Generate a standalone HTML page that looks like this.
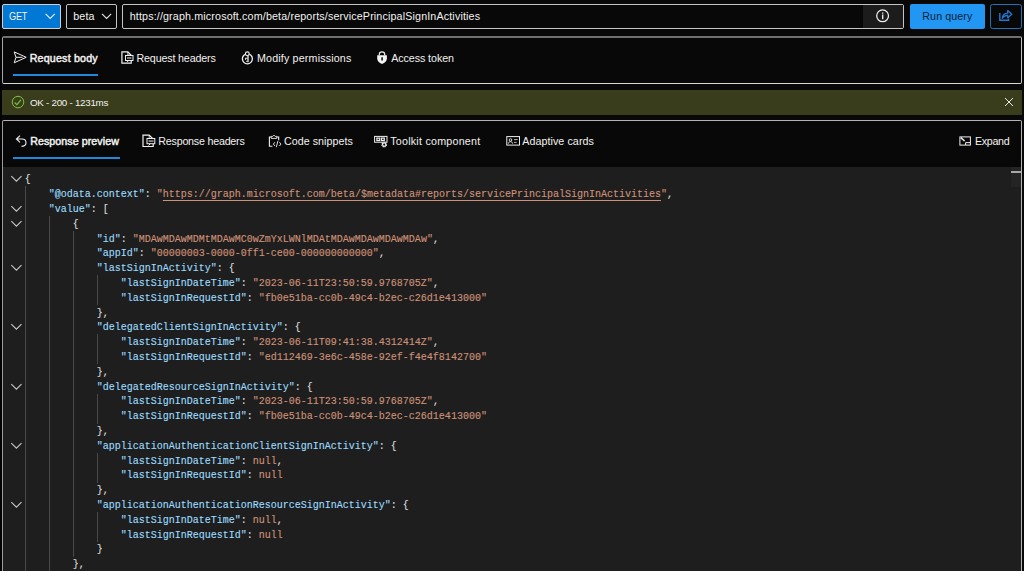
<!DOCTYPE html>
<html lang="en">
<head>
<meta charset="utf-8">
<title>Graph Explorer</title>
<style>
html,body{margin:0;padding:0;}
body{width:1024px;height:571px;overflow:hidden;background:#080808;position:relative;font-family:"Liberation Sans",sans-serif;font-size:10.7px;color:#f3f2f1;}
.abs{position:absolute;box-sizing:border-box;}
.t{position:absolute;white-space:nowrap;line-height:14px;font-size:10.7px;}
.b{-webkit-text-stroke:0.45px #f3f2f1;}
#get{left:2px;top:4px;width:59px;height:25px;background:#0078d4;border:1px solid #cfcfcf;border-radius:2px;}
#beta{left:66px;top:4px;width:51px;height:25px;background:#080808;border:1px solid #c4c4c4;border-radius:2px;}
#url{left:122px;top:4px;width:782px;height:25px;background:#080808;border:1px solid #c4c4c4;border-radius:2px;}
#info{left:863px;top:5px;width:40px;height:23px;background:#1c1c1c;}
#run{left:909.5px;top:4px;width:75.5px;height:25px;background:#2196f3;border-radius:2px;}
#share{left:990px;top:4px;width:32px;height:25px;background:#080808;border:1px solid #2372b8;border-radius:2.5px;}
#req{left:2px;top:36px;width:1020px;height:48px;background:#080808;border:1px solid #c4c4c4;border-top:2px solid #707070;border-left-color:#a4a4a4;border-bottom-color:#d8d8d8;border-radius:2px;}
#status{left:2px;top:89.5px;width:1020px;height:25px;background:#393d1b;}
#resp{left:2px;top:120px;width:1020px;height:460px;background:#080808;border:1px solid #b4b4b4;border-left-color:#9c9c9c;border-radius:2px;}
#code{left:3px;top:167px;width:1018px;height:404px;background:#1e1e1e;}
.ul{position:absolute;height:2px;background:#2188dc;}
.ln{-webkit-text-stroke:0.12px currentColor;position:absolute;white-space:pre;font-family:"Liberation Mono",monospace;font-size:10px;line-height:14.8px;height:14.8px;}
.k{color:#9cdcfe}.s{color:#ce9178}.p{color:#dcdcdc}.u{color:#ce9178;text-decoration:underline;text-underline-offset:3.2px;text-decoration-thickness:1px;}
.guide{position:absolute;width:1px;height:15.4px;background:#484848;}
#ov{position:absolute;left:0;top:0;width:1024px;height:571px;pointer-events:none;}
#ov *{fill:none;stroke:#f0f0f0;stroke-width:1;}
</style>
</head>
<body>
<div class="abs" style="left:0;top:0;width:1.5px;height:571px;background:#030303;"></div>
<div id="get" class="abs"></div>
<div class="t" id="t_get" style="left:9.5px;top:9.3px;transform:scaleX(.86);transform-origin:0 50%;letter-spacing:-0.295px;left:9.30px;">GET</div>
<div id="beta" class="abs"></div>
<div class="t" id="t_beta" style="left:73.5px;top:9.3px;letter-spacing:0.129px;left:73.30px;">beta</div>
<div id="url" class="abs"></div>
<div id="info" class="abs"></div>
<div class="t" id="t_url" style="left:130px;top:9.3px;letter-spacing:0.155px;left:129.70px;">https://graph.microsoft.com/beta/reports/servicePrincipalSignInActivities</div>
<div id="run" class="abs"></div>
<div class="t" id="t_run" style="left:922px;top:9.3px;color:#0c2236;letter-spacing:0.086px;left:922.30px;">Run query</div>
<div id="share" class="abs"></div>

<div id="req" class="abs"></div>
<div class="t b" id="t_reqbody" style="left:29.5px;top:51.3px;letter-spacing:0.186px;left:29.70px;">Request body</div>
<div class="ul" style="left:13.2px;top:73.8px;width:84.9px;"></div>
<div class="t" id="t_reqhead" style="left:136px;top:51.3px;letter-spacing:-0.150px;left:136.50px;">Request headers</div>
<div class="t" id="t_modperm" style="left:257px;top:51.3px;letter-spacing:0.167px;left:257.00px;">Modify permissions</div>
<div class="t" id="t_token" style="left:391px;top:51.3px;letter-spacing:-0.069px;left:391.20px;">Access token</div>

<div id="status" class="abs"></div>
<div class="t" id="t_status" style="left:30px;top:95.7px;font-size:9.8px;letter-spacing:-0.274px;left:30.00px;">OK - 200 - 1231ms</div>

<div id="resp" class="abs"></div>
<div id="code" class="abs"></div>
<div class="t b" id="t_resprev" style="left:30px;top:134px;letter-spacing:0.052px;left:30.20px;">Response preview</div>
<div class="ul" style="left:13.2px;top:156.8px;width:106.9px;"></div>
<div class="t" id="t_reshead" style="left:158px;top:134px;letter-spacing:-0.215px;left:158.30px;">Response headers</div>
<div class="t" id="t_snip" style="left:284px;top:134px;letter-spacing:0.056px;left:283.90px;">Code snippets</div>
<div class="t" id="t_toolkit" style="left:390px;top:134px;letter-spacing:0.241px;left:390.20px;">Toolkit component</div>
<div class="t" id="t_adapt" style="left:522px;top:134px;letter-spacing:0.077px;left:522.20px;">Adaptive cards</div>
<div class="t" id="t_expand" style="left:974px;top:134px;letter-spacing:-0.330px;left:975.00px;">Expand</div>

<div class="ln" style="top:173.40px;left:24.80px"><span class="p">{</span></div>
<svg style="position:absolute;left:11px;top:176.40px;overflow:visible" width="11" height="6" viewBox="0 0 11 6"><path d="M0.3 0.2 L5.4 5.2 L10.5 0.2" fill="none" stroke="#c8c8c8" stroke-width="1.1"/></svg>
<div class="ln" style="top:188.20px;left:48.80px"><span class="k">&quot;@odata.context&quot;</span><span class="p">: </span><span class="s">&quot;</span><span class="u">https://graph.microsoft.com/beta/$metadata#reports/servicePrincipalSignInActivities</span><span class="s">&quot;</span><span class="p">,</span></div>
<div class="guide" style="top:186.30px;left:24.80px"></div>
<div class="ln" style="top:203.00px;left:48.80px"><span class="k">&quot;value&quot;</span><span class="p">: [</span></div>
<svg style="position:absolute;left:11px;top:206.00px;overflow:visible" width="11" height="6" viewBox="0 0 11 6"><path d="M0.3 0.2 L5.4 5.2 L10.5 0.2" fill="none" stroke="#c8c8c8" stroke-width="1.1"/></svg>
<div class="guide" style="top:201.10px;left:24.80px"></div>
<div class="ln" style="top:217.80px;left:72.80px"><span class="p">{</span></div>
<svg style="position:absolute;left:11px;top:220.80px;overflow:visible" width="11" height="6" viewBox="0 0 11 6"><path d="M0.3 0.2 L5.4 5.2 L10.5 0.2" fill="none" stroke="#c8c8c8" stroke-width="1.1"/></svg>
<div class="guide" style="top:215.90px;left:24.80px"></div>
<div class="guide" style="top:215.90px;left:48.80px"></div>
<div class="ln" style="top:232.60px;left:96.80px"><span class="k">&quot;id&quot;</span><span class="p">: </span><span class="s">&quot;MDAwMDAwMDMtMDAwMC0wZmYxLWNlMDAtMDAwMDAwMDAwMDAw&quot;</span><span class="p">,</span></div>
<div class="guide" style="top:230.70px;left:24.80px"></div>
<div class="guide" style="top:230.70px;left:48.80px"></div>
<div class="guide" style="top:230.70px;left:72.80px"></div>
<div class="ln" style="top:247.40px;left:96.80px"><span class="k">&quot;appId&quot;</span><span class="p">: </span><span class="s">&quot;00000003-0000-0ff1-ce00-000000000000&quot;</span><span class="p">,</span></div>
<div class="guide" style="top:245.50px;left:24.80px"></div>
<div class="guide" style="top:245.50px;left:48.80px"></div>
<div class="guide" style="top:245.50px;left:72.80px"></div>
<div class="ln" style="top:262.20px;left:96.80px"><span class="k">&quot;lastSignInActivity&quot;</span><span class="p">: {</span></div>
<svg style="position:absolute;left:11px;top:265.20px;overflow:visible" width="11" height="6" viewBox="0 0 11 6"><path d="M0.3 0.2 L5.4 5.2 L10.5 0.2" fill="none" stroke="#c8c8c8" stroke-width="1.1"/></svg>
<div class="guide" style="top:260.30px;left:24.80px"></div>
<div class="guide" style="top:260.30px;left:48.80px"></div>
<div class="guide" style="top:260.30px;left:72.80px"></div>
<div class="ln" style="top:277.00px;left:120.80px"><span class="k">&quot;lastSignInDateTime&quot;</span><span class="p">: </span><span class="s">&quot;2023-06-11T23:50:59.9768705Z&quot;</span><span class="p">,</span></div>
<div class="guide" style="top:275.10px;left:24.80px"></div>
<div class="guide" style="top:275.10px;left:48.80px"></div>
<div class="guide" style="top:275.10px;left:72.80px"></div>
<div class="guide" style="top:275.10px;left:96.80px"></div>
<div class="ln" style="top:291.80px;left:120.80px"><span class="k">&quot;lastSignInRequestId&quot;</span><span class="p">: </span><span class="s">&quot;fb0e51ba-cc0b-49c4-b2ec-c26d1e413000&quot;</span></div>
<div class="guide" style="top:289.90px;left:24.80px"></div>
<div class="guide" style="top:289.90px;left:48.80px"></div>
<div class="guide" style="top:289.90px;left:72.80px"></div>
<div class="guide" style="top:289.90px;left:96.80px"></div>
<div class="ln" style="top:306.60px;left:96.80px"><span class="p">},</span></div>
<div class="guide" style="top:304.70px;left:24.80px"></div>
<div class="guide" style="top:304.70px;left:48.80px"></div>
<div class="guide" style="top:304.70px;left:72.80px"></div>
<div class="ln" style="top:321.40px;left:96.80px"><span class="k">&quot;delegatedClientSignInActivity&quot;</span><span class="p">: {</span></div>
<svg style="position:absolute;left:11px;top:324.40px;overflow:visible" width="11" height="6" viewBox="0 0 11 6"><path d="M0.3 0.2 L5.4 5.2 L10.5 0.2" fill="none" stroke="#c8c8c8" stroke-width="1.1"/></svg>
<div class="guide" style="top:319.50px;left:24.80px"></div>
<div class="guide" style="top:319.50px;left:48.80px"></div>
<div class="guide" style="top:319.50px;left:72.80px"></div>
<div class="ln" style="top:336.20px;left:120.80px"><span class="k">&quot;lastSignInDateTime&quot;</span><span class="p">: </span><span class="s">&quot;2023-06-11T09:41:38.4312414Z&quot;</span><span class="p">,</span></div>
<div class="guide" style="top:334.30px;left:24.80px"></div>
<div class="guide" style="top:334.30px;left:48.80px"></div>
<div class="guide" style="top:334.30px;left:72.80px"></div>
<div class="guide" style="top:334.30px;left:96.80px"></div>
<div class="ln" style="top:351.00px;left:120.80px"><span class="k">&quot;lastSignInRequestId&quot;</span><span class="p">: </span><span class="s">&quot;ed112469-3e6c-458e-92ef-f4e4f8142700&quot;</span></div>
<div class="guide" style="top:349.10px;left:24.80px"></div>
<div class="guide" style="top:349.10px;left:48.80px"></div>
<div class="guide" style="top:349.10px;left:72.80px"></div>
<div class="guide" style="top:349.10px;left:96.80px"></div>
<div class="ln" style="top:365.80px;left:96.80px"><span class="p">},</span></div>
<div class="guide" style="top:363.90px;left:24.80px"></div>
<div class="guide" style="top:363.90px;left:48.80px"></div>
<div class="guide" style="top:363.90px;left:72.80px"></div>
<div class="ln" style="top:380.60px;left:96.80px"><span class="k">&quot;delegatedResourceSignInActivity&quot;</span><span class="p">: {</span></div>
<svg style="position:absolute;left:11px;top:383.60px;overflow:visible" width="11" height="6" viewBox="0 0 11 6"><path d="M0.3 0.2 L5.4 5.2 L10.5 0.2" fill="none" stroke="#c8c8c8" stroke-width="1.1"/></svg>
<div class="guide" style="top:378.70px;left:24.80px"></div>
<div class="guide" style="top:378.70px;left:48.80px"></div>
<div class="guide" style="top:378.70px;left:72.80px"></div>
<div class="ln" style="top:395.40px;left:120.80px"><span class="k">&quot;lastSignInDateTime&quot;</span><span class="p">: </span><span class="s">&quot;2023-06-11T23:50:59.9768705Z&quot;</span><span class="p">,</span></div>
<div class="guide" style="top:393.50px;left:24.80px"></div>
<div class="guide" style="top:393.50px;left:48.80px"></div>
<div class="guide" style="top:393.50px;left:72.80px"></div>
<div class="guide" style="top:393.50px;left:96.80px"></div>
<div class="ln" style="top:410.20px;left:120.80px"><span class="k">&quot;lastSignInRequestId&quot;</span><span class="p">: </span><span class="s">&quot;fb0e51ba-cc0b-49c4-b2ec-c26d1e413000&quot;</span></div>
<div class="guide" style="top:408.30px;left:24.80px"></div>
<div class="guide" style="top:408.30px;left:48.80px"></div>
<div class="guide" style="top:408.30px;left:72.80px"></div>
<div class="guide" style="top:408.30px;left:96.80px"></div>
<div class="ln" style="top:425.00px;left:96.80px"><span class="p">},</span></div>
<div class="guide" style="top:423.10px;left:24.80px"></div>
<div class="guide" style="top:423.10px;left:48.80px"></div>
<div class="guide" style="top:423.10px;left:72.80px"></div>
<div class="ln" style="top:439.80px;left:96.80px"><span class="k">&quot;applicationAuthenticationClientSignInActivity&quot;</span><span class="p">: {</span></div>
<svg style="position:absolute;left:11px;top:442.80px;overflow:visible" width="11" height="6" viewBox="0 0 11 6"><path d="M0.3 0.2 L5.4 5.2 L10.5 0.2" fill="none" stroke="#c8c8c8" stroke-width="1.1"/></svg>
<div class="guide" style="top:437.90px;left:24.80px"></div>
<div class="guide" style="top:437.90px;left:48.80px"></div>
<div class="guide" style="top:437.90px;left:72.80px"></div>
<div class="ln" style="top:454.60px;left:120.80px"><span class="k">&quot;lastSignInDateTime&quot;</span><span class="p">: </span><span class="s">null</span><span class="p">,</span></div>
<div class="guide" style="top:452.70px;left:24.80px"></div>
<div class="guide" style="top:452.70px;left:48.80px"></div>
<div class="guide" style="top:452.70px;left:72.80px"></div>
<div class="guide" style="top:452.70px;left:96.80px"></div>
<div class="ln" style="top:469.40px;left:120.80px"><span class="k">&quot;lastSignInRequestId&quot;</span><span class="p">: </span><span class="s">null</span></div>
<div class="guide" style="top:467.50px;left:24.80px"></div>
<div class="guide" style="top:467.50px;left:48.80px"></div>
<div class="guide" style="top:467.50px;left:72.80px"></div>
<div class="guide" style="top:467.50px;left:96.80px"></div>
<div class="ln" style="top:484.20px;left:96.80px"><span class="p">},</span></div>
<div class="guide" style="top:482.30px;left:24.80px"></div>
<div class="guide" style="top:482.30px;left:48.80px"></div>
<div class="guide" style="top:482.30px;left:72.80px"></div>
<div class="ln" style="top:499.00px;left:96.80px"><span class="k">&quot;applicationAuthenticationResourceSignInActivity&quot;</span><span class="p">: {</span></div>
<svg style="position:absolute;left:11px;top:502.00px;overflow:visible" width="11" height="6" viewBox="0 0 11 6"><path d="M0.3 0.2 L5.4 5.2 L10.5 0.2" fill="none" stroke="#c8c8c8" stroke-width="1.1"/></svg>
<div class="guide" style="top:497.10px;left:24.80px"></div>
<div class="guide" style="top:497.10px;left:48.80px"></div>
<div class="guide" style="top:497.10px;left:72.80px"></div>
<div class="ln" style="top:513.80px;left:120.80px"><span class="k">&quot;lastSignInDateTime&quot;</span><span class="p">: </span><span class="s">null</span><span class="p">,</span></div>
<div class="guide" style="top:511.90px;left:24.80px"></div>
<div class="guide" style="top:511.90px;left:48.80px"></div>
<div class="guide" style="top:511.90px;left:72.80px"></div>
<div class="guide" style="top:511.90px;left:96.80px"></div>
<div class="ln" style="top:528.60px;left:120.80px"><span class="k">&quot;lastSignInRequestId&quot;</span><span class="p">: </span><span class="s">null</span></div>
<div class="guide" style="top:526.70px;left:24.80px"></div>
<div class="guide" style="top:526.70px;left:48.80px"></div>
<div class="guide" style="top:526.70px;left:72.80px"></div>
<div class="guide" style="top:526.70px;left:96.80px"></div>
<div class="ln" style="top:543.40px;left:96.80px"><span class="p">}</span></div>
<div class="guide" style="top:541.50px;left:24.80px"></div>
<div class="guide" style="top:541.50px;left:48.80px"></div>
<div class="guide" style="top:541.50px;left:72.80px"></div>
<div class="ln" style="top:558.20px;left:72.80px"><span class="p">},</span></div>
<div class="guide" style="top:556.30px;left:24.80px"></div>
<div class="guide" style="top:556.30px;left:48.80px"></div>
<div class="abs" style="left:1011.4px;top:167px;width:9.6px;height:20px;background:#242424;"></div>
<div class="abs" style="left:1011.4px;top:171.3px;width:9.6px;height:1.4px;background:#a8a8a8;"></div>

<svg id="ov" viewBox="0 0 1024 571">
<!-- chevrons top bar -->
<path d="M45.6 13.9 L50.2 18.5 L54.8 13.9" style="stroke:#e6eef6;stroke-width:1.1"/>
<path d="M102 13.9 L106.6 18.5 L111.2 13.9" style="stroke:#e8e8e8;stroke-width:1.1"/>
<!-- info -->
<circle cx="882.6" cy="15.8" r="5.9" style="stroke-width:1.25"/>
<path d="M882.7 14.6 V19.2" style="stroke-width:1.3"/>
<path d="M882.7 12.6 V13.8" style="stroke-width:1.3"/>
<!-- share -->
<g style="stroke:#1f78d1">
<path d="M999.8 13 V20.2 H1008.6 V18.6" style="stroke:#1f78d1;stroke-width:1.4"/>
<path d="M1002.3 18.2 C1002.6 15.2 1004.6 13.4 1007.7 13.2 V10.6 L1011.8 14.3 L1007.7 17.8 V15.4 C1005.3 15.4 1003.6 16.3 1002.3 18.2 Z" style="stroke:#1f78d1;stroke-width:1.3;stroke-linejoin:round"/>
</g>
<!-- send -->
<path d="M14.2 51.9 L26.2 57.3 L14.2 62.8 L16 57.3 Z M16 57.3 H22.5" style="stroke-linejoin:round"/>
<!-- request headers doc -->
<path d="M131.2 61 V63.1 H121.9 V51.8 H127.8 L131 55 V55.3" style="stroke-width:1.2"/>
<path d="M127.8 51.8 V55 H131" style="stroke-width:0.8"/>
<rect x="125.5" y="55.5" width="7.5" height="5"/>
<path d="M127 58 H131.5" style="stroke:#b0b0b0;stroke-width:1.4"/>
<path d="M128.6 60.5 L127 62.2" style="stroke-width:1"/>
<!-- modify permissions -->
<circle cx="247.4" cy="58.8" r="5" style="stroke-width:1.3"/>
<circle cx="247.3" cy="53.8" r="1.9" style="fill:#080808;stroke-width:1.1"/>
<path d="M248 55.6 V62.2" style="stroke-width:1.3"/>
<path d="M247.5 58.2 H245.5 V59.8 M247.5 61.3 H246.2" style="stroke-width:1"/>
<!-- lock -->
<path d="M379.3 55.2 V54.3 C379.3 52.7 380.5 51.8 382 51.8 C383.5 51.8 384.7 52.7 384.7 54.3 V55.2" style="stroke-width:1.2"/>
<path d="M377.2 55.2 H386.9 V58.2 C386.9 61 384.9 62.9 382 63.9 C379.1 62.9 377.2 61 377.2 58.2 Z" style="fill:#f4f4f4;stroke:none"/>
<path d="M382.1 57.2 V60.6" style="stroke:#080808;stroke-width:1.5"/>
<!-- status check -->
<circle cx="18" cy="102.1" r="5.8" style="stroke:#7cc242"/>
<path d="M14.6 102.5 L16.9 104.6 L20.9 99.9" style="stroke:#7cc242;stroke-width:1.1"/>
<path d="M1005 98 L1013 106 M1013 98 L1005 106" style="stroke:#e8e8e8;stroke-width:1"/>
<!-- undo -->
<path d="M20 135.6 L16.4 139 L20 142.4 M16.4 139 H22 C24.6 139 26 140.8 26 142.7 C26 144.7 24.5 146.3 21.4 146.3" style="stroke-width:1.1"/>
<!-- response headers doc -->
<path d="M153.2 144 V146.5 H143 V135.2 H149.2 L152.8 138.6" style="stroke-width:1.2"/>
<path d="M149.2 135.2 V138.4 H152.6" style="stroke-width:0.8"/>
<rect x="147" y="138.5" width="7.8" height="5.2"/>
<path d="M148.5 141.1 H153.5" style="stroke:#b0b0b0;stroke-width:1.4"/>
<path d="M150.2 143.7 L148.6 145.5" style="stroke-width:1"/>
<!-- code snippets -->
<path d="M271.2 137 H269.4 V146.2 H272.4 M276.8 137 H278.7 V140.3" style="stroke-width:1.1"/>
<path d="M271.2 138.4 V136.4 H272.8 L274 135.1 L275.2 136.4 H276.8 V138.4 Z" style="stroke-width:0.9"/>
<path d="M274.9 142.2 L273.4 144.1 L274.9 146 M279.4 142.2 L280.9 144.1 L279.4 146 M277.9 141 L276.3 147.2" style="stroke-width:0.9"/>
<!-- toolkit -->
<rect x="374.6" y="136.4" width="12.4" height="5.8"/>
<rect x="376.9" y="138.1" width="2.8" height="2.4" style="stroke-width:1.2"/>
<rect x="381.5" y="138.1" width="2.8" height="2.4" style="stroke-width:1.2"/>
<circle cx="384.2" cy="144.6" r="2.1" style="fill:#080808;stroke-width:1.5;stroke-dasharray:1.1 0.55"/>
<circle cx="384.2" cy="144.6" r="1.6" style="fill:#080808;stroke-width:1.1"/>
<!-- adaptive cards -->
<rect x="506.8" y="136.6" width="12.7" height="8.5"/>
<circle cx="510.5" cy="140" r="1.3" style="stroke-width:0.9"/>
<path d="M508.4 143.6 C508.8 142 509.6 141.6 510.5 141.6 C511.4 141.6 512.2 142 512.6 143.6" style="stroke-width:0.9"/>
<path d="M514 139.6 H517.6 M514 142.4 H516.6" style="stroke-width:0.9;stroke:#c8c8c8"/>
<!-- expand -->
<rect x="959.9" y="136.9" width="10.5" height="8.2"/>
<path d="M960.8 137.6 L964.6 141" style="stroke-width:1.5"/>
<path d="M965.6 145 V142.6 H970.2" style="stroke-width:1"/>
</svg>
</body>
</html>
